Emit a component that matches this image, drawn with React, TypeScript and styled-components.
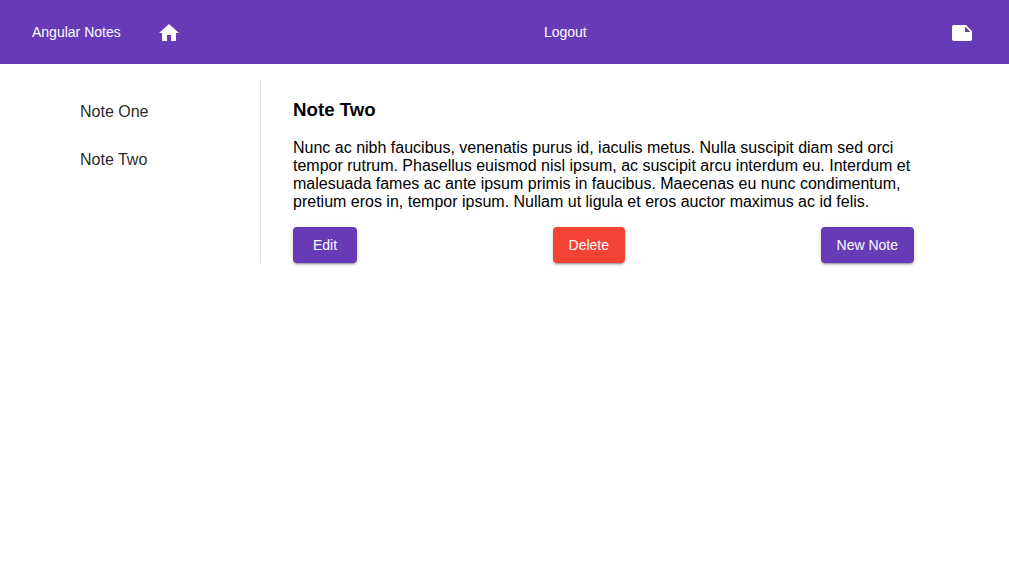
import React from "react";
import styled, { createGlobalStyle, css } from "styled-components";

const GlobalStyle = createGlobalStyle`
  body {
    margin: 0;
    background: #fff;
    color: #000;
    font-family: "Liberation Sans", Arial, sans-serif;
    font-size: 16px;
  }
`;

const Toolbar = styled.header`
  display: flex;
  align-items: center;
  justify-content: space-between;
  height: 64px;
  padding: 0 15px 0 16px;
  background: #673ab7;
  color: #fff;
`;

const ToolbarGroup = styled.nav`
  display: flex;
  align-items: center;
`;

const buttonBase = css`
  display: inline-flex;
  align-items: center;
  justify-content: center;
  box-sizing: border-box;
  min-width: 64px;
  height: 36px;
  padding: 0 16px;
  border: 0;
  border-radius: 4px;
  color: #fff;
  font-family: inherit;
  font-size: 14px;
  line-height: 36px;
  white-space: nowrap;
  text-decoration: none;
  cursor: pointer;
`;

const ToolbarLink = styled.a`
  ${buttonBase}
`;

const ToolbarButton = styled.button`
  ${buttonBase}
  background: transparent;
`;

const RaisedButton = styled.button<{ $tone: "primary" | "warn" }>`
  ${buttonBase}
  background: ${({ $tone }) => ($tone === "warn" ? "#f44336" : "#673ab7")};
  box-shadow:
    0 3px 1px -2px rgba(0, 0, 0, 0.2),
    0 2px 2px 0 rgba(0, 0, 0, 0.14),
    0 1px 5px 0 rgba(0, 0, 0, 0.12);
`;

const Icon = styled.svg`
  display: block;
  flex: none;
  width: 24px;
  height: 24px;
  margin-top: 2px;
  fill: currentColor;
`;

const Page = styled.main`
  display: flex;
  padding: 16px 63px 16px 64px;
`;

const Sidebar = styled.nav`
  flex: none;
  box-sizing: border-box;
  width: 197px;
  border-right: 1px solid rgba(0, 0, 0, 0.12);
`;

const NoteList = styled.ul`
  margin: 0;
  padding: 8px 0 0;
  list-style: none;
`;

const NoteLink = styled.a`
  display: flex;
  align-items: center;
  height: 48px;
  padding: 0 16px;
  color: rgba(0, 0, 0, 0.87);
  text-decoration: none;
`;

const Note = styled.article`
  flex: 1;
  min-width: 0;
  padding: 0 32px;
`;

const NoteTitle = styled.h3`
  margin: 19px 0;
  line-height: 21px;
`;

const NoteBody = styled.p`
  margin: 0 0 16px;
  line-height: 18px;
`;

const Actions = styled.div`
  display: flex;
  justify-content: space-between;
`;

const notes = ["Note One", "Note Two"];

export default function App() {
  return (
    <>
      <GlobalStyle />
      <Toolbar>
        <ToolbarGroup>
          <ToolbarLink href="#">Angular Notes</ToolbarLink>
          <ToolbarLink href="#" aria-label="Home">
            <Icon viewBox="0 0 24 24" aria-hidden="true">
              <path d="M10 20v-6h4v6h5v-8h3L12 3 2 12h3v8z" />
            </Icon>
          </ToolbarLink>
        </ToolbarGroup>
        <ToolbarButton type="button">Logout</ToolbarButton>
        <ToolbarLink href="#notes" aria-label="Notes">
          <Icon viewBox="0 0 24 24" aria-hidden="true">
            <path d="M22 10l-6-6H4c-1.1 0-2 .9-2 2v12.01c0 1.1.9 1.99 2 1.99l16-.01c1.1 0 2-.89 2-1.99v-8zm-7-4.5l5.5 5.5H15V5.5z" />
          </Icon>
        </ToolbarLink>
      </Toolbar>
      <Page>
        <Sidebar aria-label="Notes">
          <NoteList>
            {notes.map((name) => (
              <li key={name}>
                <NoteLink href="#notes">{name}</NoteLink>
              </li>
            ))}
          </NoteList>
        </Sidebar>
        <Note>
          <NoteTitle>Note Two</NoteTitle>
          <NoteBody>
            Nunc ac nibh faucibus, venenatis purus id, iaculis metus. Nulla
            suscipit diam sed orci tempor rutrum. Phasellus euismod nisl ipsum,
            ac suscipit arcu interdum eu. Interdum et malesuada fames ac ante
            ipsum primis in faucibus. Maecenas eu nunc condimentum, pretium eros
            in, tempor ipsum. Nullam ut ligula et eros auctor maximus ac id
            felis.
          </NoteBody>
          <Actions>
            <RaisedButton type="button" $tone="primary">
              Edit
            </RaisedButton>
            <RaisedButton type="button" $tone="warn">
              Delete
            </RaisedButton>
            <RaisedButton type="button" $tone="primary">
              New Note
            </RaisedButton>
          </Actions>
        </Note>
      </Page>
    </>
  );
}
